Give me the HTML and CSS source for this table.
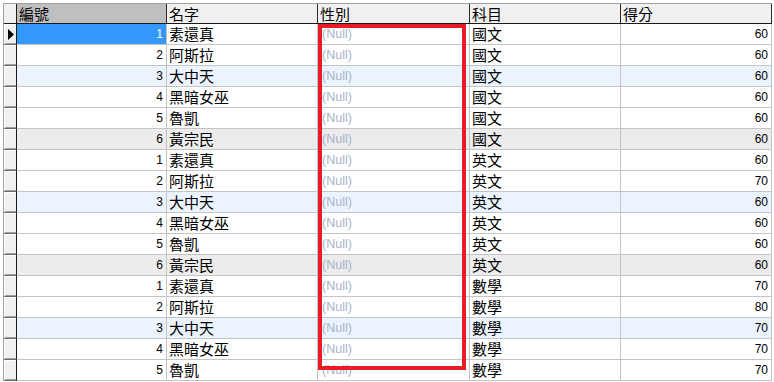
FILE: index.html
```html
<!DOCTYPE html>
<html lang="zh-Hant">
<head>
<meta charset="utf-8">
<title>Grid</title>
<link rel="stylesheet" href="styles.css">
</head>
<body>
<div class="grid">
  <div class="row head">
    <div class="ind"></div>
    <div class="c c1 sel-col">編號</div>
    <div class="c c2">名字</div>
    <div class="c c3">性別</div>
    <div class="c c4">科目</div>
    <div class="c c5">得分</div>
  </div>
  <div class="row">
    <div class="ind"><svg class="arrow" width="6" height="11" viewBox="0 0 6 11"><path d="M0 0 L6 5.5 L0 11 Z" fill="#000"/></svg></div>
    <div class="c c1 num sel">1</div><div class="c c2 txt">素還真</div><div class="c c3 null">(Null)</div><div class="c c4 txt">國文</div><div class="c c5 num">60</div>
  </div>
  <div class="row">
    <div class="ind"></div>
    <div class="c c1 num">2</div><div class="c c2 txt">阿斯拉</div><div class="c c3 null">(Null)</div><div class="c c4 txt">國文</div><div class="c c5 num">60</div>
  </div>
  <div class="row blue">
    <div class="ind"></div>
    <div class="c c1 num">3</div><div class="c c2 txt">大中天</div><div class="c c3 null">(Null)</div><div class="c c4 txt">國文</div><div class="c c5 num">60</div>
  </div>
  <div class="row">
    <div class="ind"></div>
    <div class="c c1 num">4</div><div class="c c2 txt">黑暗女巫</div><div class="c c3 null">(Null)</div><div class="c c4 txt">國文</div><div class="c c5 num">60</div>
  </div>
  <div class="row">
    <div class="ind"></div>
    <div class="c c1 num">5</div><div class="c c2 txt">魯凱</div><div class="c c3 null">(Null)</div><div class="c c4 txt">國文</div><div class="c c5 num">60</div>
  </div>
  <div class="row gray">
    <div class="ind"></div>
    <div class="c c1 num">6</div><div class="c c2 txt">黃宗民</div><div class="c c3 null">(Null)</div><div class="c c4 txt">國文</div><div class="c c5 num">60</div>
  </div>
  <div class="row">
    <div class="ind"></div>
    <div class="c c1 num">1</div><div class="c c2 txt">素還真</div><div class="c c3 null">(Null)</div><div class="c c4 txt">英文</div><div class="c c5 num">60</div>
  </div>
  <div class="row">
    <div class="ind"></div>
    <div class="c c1 num">2</div><div class="c c2 txt">阿斯拉</div><div class="c c3 null">(Null)</div><div class="c c4 txt">英文</div><div class="c c5 num">70</div>
  </div>
  <div class="row blue">
    <div class="ind"></div>
    <div class="c c1 num">3</div><div class="c c2 txt">大中天</div><div class="c c3 null">(Null)</div><div class="c c4 txt">英文</div><div class="c c5 num">60</div>
  </div>
  <div class="row">
    <div class="ind"></div>
    <div class="c c1 num">4</div><div class="c c2 txt">黑暗女巫</div><div class="c c3 null">(Null)</div><div class="c c4 txt">英文</div><div class="c c5 num">60</div>
  </div>
  <div class="row">
    <div class="ind"></div>
    <div class="c c1 num">5</div><div class="c c2 txt">魯凱</div><div class="c c3 null">(Null)</div><div class="c c4 txt">英文</div><div class="c c5 num">60</div>
  </div>
  <div class="row gray">
    <div class="ind"></div>
    <div class="c c1 num">6</div><div class="c c2 txt">黃宗民</div><div class="c c3 null">(Null)</div><div class="c c4 txt">英文</div><div class="c c5 num">60</div>
  </div>
  <div class="row">
    <div class="ind"></div>
    <div class="c c1 num">1</div><div class="c c2 txt">素還真</div><div class="c c3 null">(Null)</div><div class="c c4 txt">數學</div><div class="c c5 num">70</div>
  </div>
  <div class="row">
    <div class="ind"></div>
    <div class="c c1 num">2</div><div class="c c2 txt">阿斯拉</div><div class="c c3 null">(Null)</div><div class="c c4 txt">數學</div><div class="c c5 num">80</div>
  </div>
  <div class="row blue">
    <div class="ind"></div>
    <div class="c c1 num">3</div><div class="c c2 txt">大中天</div><div class="c c3 null">(Null)</div><div class="c c4 txt">數學</div><div class="c c5 num">70</div>
  </div>
  <div class="row">
    <div class="ind"></div>
    <div class="c c1 num">4</div><div class="c c2 txt">黑暗女巫</div><div class="c c3 null">(Null)</div><div class="c c4 txt">數學</div><div class="c c5 num">70</div>
  </div>
  <div class="row">
    <div class="ind"></div>
    <div class="c c1 num">5</div><div class="c c2 txt">魯凱</div><div class="c c3 null">(Null)</div><div class="c c4 txt">數學</div><div class="c c5 num">70</div>
  </div>
  <div class="highlight"></div>
</div>
</body>
</html>
```
FILE: styles.css
```css
html, body {
  margin: 0;
  padding: 0;
  background: #fff;
  overflow: hidden;
}
body {
  width: 774px;
  height: 382px;
}
.grid {
  position: relative;
  margin: 3px 0 0 3px;
  width: 768px;
  border-left: 1px solid #a0a0a0;
  border-top: 1px solid #a0a0a0;
  font-family: "Noto Sans CJK TC", "Noto Sans CJK SC", sans-serif;
  font-size: 15px;
  color: #000;
}
.row {
  display: flex;
  height: 20px;
  border-bottom: 1px solid #c4c4c4;
  background: #fff;
}
.row.blue { background: #ebf4fe; }
.row.gray { background: #ececec; }
.row.head {
  height: 19px;
  border-bottom: 1px solid #1a1a1a;
  background: #f0f0f0;
}
.ind {
  width: 12px;
  flex: none;
  background: #f0f0f0;
  border-right: 1px solid #1a1a1a;
  box-shadow: inset 1px 1px 0 #fff, inset 0 -1px 0 #a0a0a0;
  display: flex;
  align-items: center;
  justify-content: center;
  margin-bottom: -1px;
  border-bottom: 1px solid #6d6d6d;
}
.row.head .ind {
  margin-bottom: 0;
  border-bottom: 0;
  box-shadow: none;
}
.arrow {
  display: block;
  margin-left: 1px;
}
.c {
  flex: none;
  box-sizing: border-box;
  border-right: 1px solid #c4c4c4;
  padding: 0 2px;
  line-height: 20px;
  white-space: nowrap;
  overflow: hidden;
}
.row.head .c {
  border-right-color: #2a2a2a;
  line-height: 19px;
}
.c1 { width: 150px; }
.c2 { width: 151px; }
.c3 { width: 152px; }
.c4 { width: 151px; }
.c5 { width: 151px; }
.sel-col { background: #bfbfbf; }
.num {
  font-family: "Liberation Sans", Arial, sans-serif;
  font-size: 12px;
  text-align: right;
  padding-right: 3px;
  line-height: 21px;
}
.sel {
  background: #3399ff;
  color: #fff;
}
.null {
  font-family: "Liberation Sans", Tahoma, sans-serif;
  font-size: 12.5px;
  color: #a9b3cb;
  padding-left: 4px;
  line-height: 21px;
}
.highlight {
  position: absolute;
  left: 314px;
  top: 20px;
  width: 140px;
  height: 338px;
  border: 4px solid #e81c26;
  pointer-events: none;
}
```
